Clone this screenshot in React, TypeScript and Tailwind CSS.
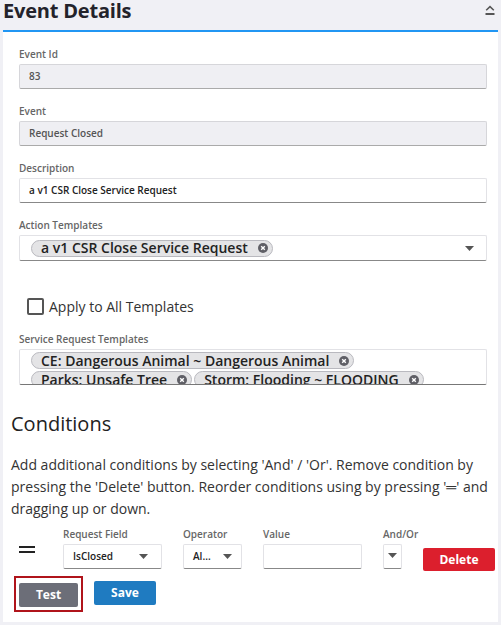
function Label({ children }: { children: React.ReactNode }) {
  return <div className="text-[10px] leading-[14px] font-semibold text-[#666] mb-[3px] whitespace-nowrap">{children}</div>
}

function Caret() {
  return (
    <svg width="9" height="5" viewBox="0 0 9 5" className="shrink-0">
      <path d="M0 0 H9 L4.5 5 Z" fill="#555" />
    </svg>
  )
}

function Chip({ text }: { text: string }) {
  return (
    <span className="inline-flex items-center h-[17px] pl-[9px] pr-[4px] gap-[10px] rounded-full border border-[#b9b9bf] bg-[#e4e4e6] text-[14px] font-semibold text-[#222] leading-none whitespace-nowrap">
      {text}
      <svg width="10" height="10" viewBox="0 0 10 10">
        <circle cx="5" cy="5" r="5" fill="#5f5f66" />
        <path d="M3.2 3.2 L6.8 6.8 M6.8 3.2 L3.2 6.8" stroke="#fff" strokeWidth="1.4" />
      </svg>
    </span>
  )
}

export default function App() {
  return (
    <div className="w-[501px] h-[625px] overflow-hidden bg-[#f0f0f5] font-['Open_Sans',sans-serif]">
      {/* header */}
      <div className="h-[30px] pl-[3px] pr-[6px] flex items-start justify-between">
        <h1 className="text-[20px] leading-[22px] font-bold text-[#23232b] tracking-[-0.2px]">Event Details</h1>
        <svg width="10" height="11" viewBox="0 0 10 11" className="mt-[5px]">
          <path d="M1.2 5.2 L5 1.6 L8.8 5.2" fill="none" stroke="#555" strokeWidth="1.5" />
          <rect x="0.5" y="8" width="9" height="2" fill="#555" />
        </svg>
      </div>

      <div className="mx-[3px] h-[592px] bg-white border-t-2 border-[#2196f3]">
        <div className="pt-[15px] pl-4 pr-[11px]">
          <Label>Event Id</Label>
          <div className="h-[25px] flex items-center px-[9px] bg-[#efeff3] border border-[#d6d6da] border-b-[#aaa] rounded-[2px] text-[10px] font-semibold text-[#555]">
            83
          </div>

          <div className="mt-[15px]">
            <Label>Event</Label>
            <div className="h-[25px] flex items-center px-[9px] bg-[#efeff3] border border-[#d6d6da] border-b-[#aaa] rounded-[2px] text-[10px] font-semibold text-[#555]">
              Request Closed
            </div>
          </div>

          <div className="mt-[15px]">
            <Label>Description</Label>
            <div className="h-[25px] flex items-center px-[9px] bg-white border border-[#e2e2e6] border-b-[#888] rounded-[2px] text-[10px] font-semibold text-[#222]">
              a v1 CSR Close Service Request
            </div>
          </div>

          <div className="mt-[15px]">
            <Label>Action Templates</Label>
            <div className="h-[26px] flex items-center justify-between pl-[11px] pr-[12px] bg-white border border-[#e2e2e6] border-b-[#888] rounded-[2px]">
              <Chip text="a v1 CSR Close Service Request" />
              <Caret />
            </div>
          </div>

          <label className="mt-[35px] ml-[8px] flex items-center gap-[5px] text-[14px] text-[#333]">
            <span className="w-[17px] h-[17px] border-2 border-[#555] rounded-[2px]" />
            Apply to All Templates
          </label>

          <div className="mt-[15px]">
            <Label>Service Request Templates</Label>
            <div className="h-[36px] overflow-hidden pl-[11px] pt-[2px] bg-white border border-[#e2e2e6] border-b-[#777] rounded-[2px] flex flex-wrap gap-x-[2px] gap-y-[1px] content-start">
              <Chip text="CE: Dangerous Animal ~ Dangerous Animal" />
              <div className="w-full h-0" />
              <Chip text="Parks: Unsafe Tree" />
              <Chip text="Storm: Flooding ~ FLOODING" />
            </div>
          </div>
        </div>

        {/* conditions */}
        <div className="pl-2 pr-[6px] mt-[25px]">
          <h2 className="text-[20px] leading-[28px] text-[#222]">Conditions</h2>
          <p className="mt-[16px] text-[14px] leading-[22px] text-[#333]">
            Add additional conditions by selecting 'And' / 'Or'. Remove condition by pressing the 'Delete' button. Reorder conditions using by pressing '<span className="font-bold">═</span>' and dragging up or down.
          </p>
        </div>

        <div className="mt-[7px] pl-4 flex items-start">
          <div className="w-[16px] mt-[19px] flex flex-col gap-[3px] mr-[28px]">
            <div className="h-[2px] bg-[#222]" />
            <div className="h-[2px] bg-[#222]" />
          </div>
          <div className="w-[99px] mr-[21px]">
            <Label>Request Field</Label>
            <div className="h-[25px] flex items-center justify-between pl-[9px] pr-[13px] border border-[#e2e2e6] border-b-[#888] rounded-[2px] text-[10px] font-semibold text-[#222]">
              IsClosed
              <Caret />
            </div>
          </div>
          <div className="w-[59px] mr-[21px]">
            <Label>Operator</Label>
            <div className="h-[25px] flex items-center justify-between pl-[9px] pr-[9px] border border-[#e2e2e6] border-b-[#888] rounded-[2px] text-[10px] font-semibold text-[#222]">
              Al...
              <Caret />
            </div>
          </div>
          <div className="w-[99px] mr-[21px]">
            <Label>Value</Label>
            <div className="h-[25px] border border-[#e2e2e6] border-b-[#888] rounded-[2px]" />
          </div>
          <div className="w-[19px] mr-[21px]">
            <Label>And/Or</Label>
            <div className="h-[25px] flex items-center justify-center pb-[3px] border border-[#e2e2e6] border-b-[#888] rounded-[2px]">
              <Caret />
            </div>
          </div>
          <button className="mt-[21px] w-[72px] h-[23px] rounded-[2px] bg-[#dc1f2d] text-white text-[12px] font-bold">
            Delete
          </button>
        </div>

        <div className="mt-[5px] pl-[11px] flex items-start gap-[11px]">
          <div className="border-2 border-[#b0141b] p-[3px]">
            <button className="w-[59px] h-[24px] rounded-[2px] bg-[#6c6e78] text-white text-[12px] font-bold">Test</button>
          </div>
          <button className="mt-[5px] w-[62px] h-[24px] rounded-[2px] bg-[#1f7bc1] text-white text-[12px] font-bold">Save</button>
        </div>
      </div>
    </div>
  )
}
